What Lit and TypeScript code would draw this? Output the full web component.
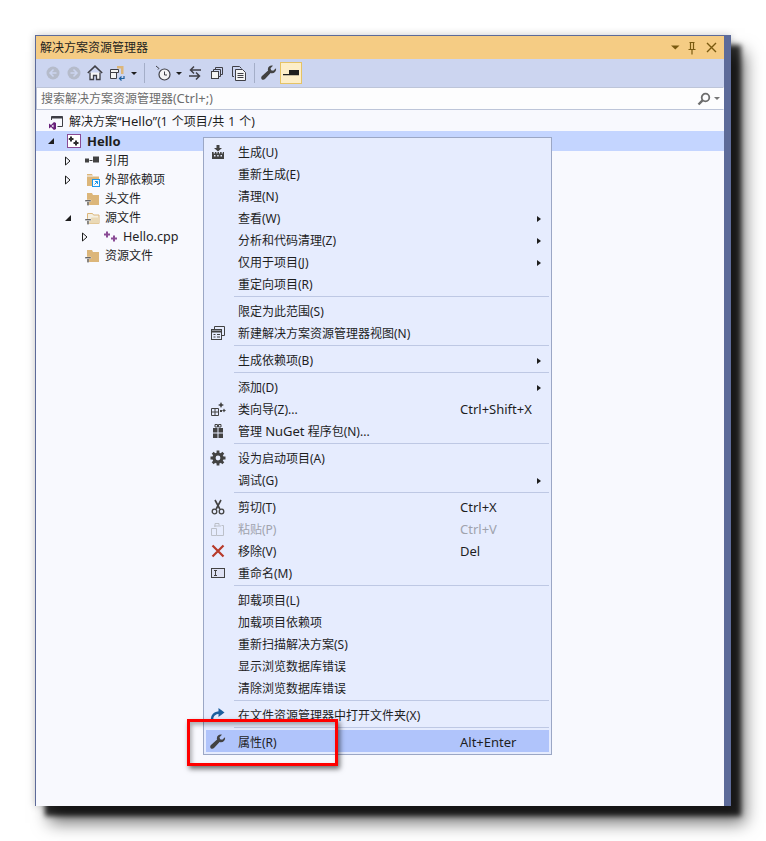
import { LitElement, html, css, svg } from "lit";
import { customElement } from "lit/decorators.js";

const ic = (w: number, h: number, body: unknown) =>
  html`<svg width=${w} height=${h} viewBox="0 0 ${w} ${h}">${body}</svg>`;

const dk = "#424242";
const icons: Record<string, unknown> = {
  build: ic(16, 16, svg`<path d="M6.500 1h3v3H12L8 7.500 4 4h2.500z" fill="${dk}"/><path d="M2 8h1.600v1.600h1.300V8h1.500v1.600h1.100V8h1.500v1.600h1.100V8h1.500v1.600h1.200V8H14v7H2z" fill="${dk}"/><path d="M4 11h1.500v1.500H4zM7.200 11h1.500v1.500H7.200zM10.500 11H12v1.500h-1.500z" fill="#e6ecfe"/>`),
  view: ic(16, 16, svg`<path d="M4.500 4.500v-3h10v9h-3" fill="none" stroke="${dk}"/><rect x="1.500" y="4.500" width="10" height="10" fill="#e6ecfe" stroke="${dk}"/><path d="M1.500 6.500h10" stroke="${dk}" stroke-width="2"/><path d="M3.500 9.500h2M7 9.500h3M3.500 12h2M7 12h3" stroke="${dk}"/>`),
  wizard: ic(16, 16, svg`<path d="M1.500 7.500h7v7h-7zM5 7.500v7M1.500 11h7" fill="none" stroke="${dk}"/><path d="M11 1l1 2 2 1-2 1-1 2-1-2-2-1 2-1zM14 7.500l.7 1.300 1.300.7-1.300.7-.7 1.300-.7-1.300-1.300-.7 1.300-.7zM10 9h2v2h-2z" fill="${dk}"/>`),
  nuget: ic(16, 16, svg`<path d="M3 5h10v10H3z" fill="${dk}"/><path d="M5 1.500h2.500v2.500H5zM8.500 1.500H11v2.500H8.500z" fill="none" stroke="${dk}"/><path d="M7.500 5h1v10h-1zM3 9.500h10v1H3z" fill="#e6ecfe"/>`),
  gear: ic(16, 16, svg`<path d="M8 .5v15M.5 8h15M2.700 2.700l10.600 10.600M13.300 2.700 2.700 13.300" stroke="${dk}" stroke-width="2.800"/><circle cx="8" cy="8" r="5.600" fill="${dk}"/><circle cx="8" cy="8" r="2.400" fill="#e6ecfe"/>`),
  cut: ic(16, 16, svg`<path d="M5 1l4.800 9M11 1 6.200 10" fill="none" stroke="${dk}" stroke-width="1.600"/><circle cx="4.500" cy="12.500" r="2.300" fill="none" stroke="${dk}" stroke-width="1.300"/><circle cx="11.500" cy="12.500" r="2.300" fill="none" stroke="${dk}" stroke-width="1.300"/>`),
  paste: ic(16, 16, svg`<path d="M1.500 7.500h5v7h-5zM6.500 14.500h7v-10h-2M5 6V2.500h4V4.500" fill="none" stroke="#bcc0c9"/><path d="M4 5h7" stroke="#bcc0c9"/>`),
  remove: ic(16, 16, svg`<path d="M2.500 2.500l11 11M13.500 2.500l-11 11" stroke="#b73a2a" stroke-width="2.200"/>`),
  rename: ic(16, 16, svg`<rect x="1.500" y="3.500" width="13" height="9" fill="#dfe2f4" stroke="${dk}"/><path d="M4 5.500h3M4 10.500h3M5.500 5.500v5" stroke="${dk}"/>`),
  open: ic(16, 16, svg`<path d="M2.500 14.500C.8 9 4.500 5.200 10.500 5.500" fill="none" stroke="#1c5f9e" stroke-width="2.400"/><path d="M8.500 1l6 4.500-6 4.500z" fill="#1c5f9e"/>`),
  wrench: ic(16, 16, svg`<path d="M15 3.200c.6 2.500-1.200 5-4 5-.6 0-1-.1-1.400-.3L4 14c-.9 1-2.500 1-3.300.2-.8-.9-.6-2.300.3-3.100l6.100-5.600C6.900 5 6.800 4.500 6.900 4c.1-2.300 2.500-4 5-3.300L9.500 3.300l.6 2 2.100.5z" fill="${dk}"/>`),
};

type Item = { t?: unknown; icon?: string; key?: string; arrow?: boolean; dis?: boolean; sel?: boolean; sep?: boolean };
const menu: Item[] = [
  { t: "生成(U)", icon: "build" },
  { t: "重新生成(E)" },
  { t: "清理(N)" },
  { t: "查看(W)", arrow: true },
  { t: "分析和代码清理(Z)", arrow: true },
  { t: "仅用于项目(J)", arrow: true },
  { t: "重定向项目(R)" },
  { sep: true },
  { t: "限定为此范围(S)" },
  { t: "新建解决方案资源管理器视图(N)", icon: "view" },
  { sep: true },
  { t: "生成依赖项(B)", arrow: true },
  { sep: true },
  { t: "添加(D)", arrow: true },
  { t: "类向导(Z)...", icon: "wizard", key: "Ctrl+Shift+X" },
  { t: html`管理 <span class="lat">NuGet</span> 程序包(N)...`, icon: "nuget" },
  { sep: true },
  { t: "设为启动项目(A)", icon: "gear" },
  { t: "调试(G)", arrow: true },
  { sep: true },
  { t: "剪切(T)", icon: "cut", key: "Ctrl+X" },
  { t: "粘贴(P)", icon: "paste", key: "Ctrl+V", dis: true },
  { t: "移除(V)", icon: "remove", key: "Del" },
  { t: "重命名(M)", icon: "rename" },
  { sep: true },
  { t: "卸载项目(L)" },
  { t: "加载项目依赖项" },
  { t: "重新扫描解决方案(S)" },
  { t: "显示浏览数据库错误" },
  { t: "清除浏览数据库错误" },
  { sep: true },
  { t: "在文件资源管理器中打开文件夹(X)", icon: "open" },
  { sep: true },
  { t: "属性(R)", icon: "wrench", key: "Alt+Enter", sel: true },
];

const tb = "#3f3f46";
const tbIcons = {
  back: ic(16, 16, svg`<circle cx="8" cy="8" r="6.500" fill="#b5bbca"/><path d="M8.500 4.500 5 8l3.500 3.500M5 8h6.500" fill="none" stroke="#ccd5f0" stroke-width="1.500"/>`),
  fwd: ic(16, 16, svg`<circle cx="8" cy="8" r="6.500" fill="#b5bbca"/><path d="M7.500 4.500 11 8l-3.500 3.500M11 8H4.500" fill="none" stroke="#ccd5f0" stroke-width="1.500"/>`),
  home: ic(16, 16, svg`<path d="M.8 8 8 1.200 15.200 8" fill="none" stroke="${tb}" stroke-width="1.600"/><path d="M3 7.500v7h3.500v-4h3v4H13v-7" fill="#f6f6f6" stroke="${tb}" stroke-width="1.300"/>`),
  sync: ic(16, 16, svg`<path d="M8 1h6.500v8H12V3.500H8z" fill="#dcb67a"/><path d="M1.500 4.500h8v3h-8zM1.500 7.500h6v6h-6z" fill="#f4f4f4" stroke="${tb}"/><path d="M15 11v2.500h-4M12.500 11.500l-2 2 2 2" fill="none" stroke="#1c5f9e" stroke-width="1.200"/>`),
  clock: ic(16, 16, svg`<circle cx="9.500" cy="9.500" r="5.500" fill="#f4f4f4" stroke="${tb}" stroke-width="1.200"/><path d="M9.500 6.500v3.500h2.500M1 1l3 2.500-1 1" fill="none" stroke="${tb}"/>`),
  swap: ic(16, 16, svg`<path d="M14 5H4M7 1.500 3.500 5 7 8.500M2 11h10M9 7.500l3.500 3.500L9 14.500" fill="none" stroke="${tb}" stroke-width="1.500"/>`),
  copy: ic(16, 16, svg`<path d="M6.500 4.500v-2h7v7h-2" fill="none" stroke="${tb}"/><path d="M4.500 6.500v-2h7v7h-2" fill="#ccd5f0" stroke="${tb}"/><rect x="2.500" y="6.500" width="7" height="7" fill="#f4f4f4" stroke="${tb}"/>`),
  pages: ic(16, 16, svg`<path d="M3 11.500h-1.500v-10h7l2 2" fill="none" stroke="${tb}"/><path d="M4.500 4.500h7l3 3v8h-10z" fill="#f4f4f4" stroke="${tb}"/><path d="M6.500 8.500h6M6.500 10.500h6M6.500 12.500h6" stroke="${tb}"/>`),
  wrench: icons.wrench,
};

@customElement("app-root")
export class AppRoot extends LitElement {
  static styles = css`
    :host {
      display: block;
      height: 841px;
      padding: 35px 0 0 35px;
      box-sizing: border-box;
      background: #fff;
      font: 12px/22px "Noto Sans", "Noto Sans CJK SC", sans-serif;
      color: #1e1e1e;
    }
    svg { display: block; }
    .lat { font-size: 13px; }
    .cpp { font-size: 12.6px; }
    .win {
      position: relative;
      display: flex;
      flex-direction: column;
      width: 696px;
      height: 771px;
      box-sizing: border-box;
      background: #5d6b99;
      padding: 1px 7px 0 1px;
      box-shadow: 10px 10px 5px rgba(0, 0, 0, 0.8), 14px 17px 16px rgba(0, 0, 0, 0.55), 0 0 8px rgba(0, 0, 0, 0.2);
    }
    .title {
      height: 23px;
      flex: none;
      display: flex;
      align-items: center;
      background: #f5cc84;
      padding: 0 7px 0 4px;
      line-height: 23px;
    }
    .title .name { flex: 1; }
    .title svg { flex: none; }
    .title .pin { margin: 0 5px 0 3px; }
    .tbar {
      height: 28px;
      flex: none;
      display: flex;
      align-items: center;
      padding-left: 6px;
      background: #ccd5f0;
    }
    .s { width: 22px; height: 22px; display: flex; align-items: center; justify-content: center; flex: none; }
    .s.n { width: 21px; }
    .caret { width: 12px; display: flex; justify-content: center; flex: none; }
    .caret.b { width: 10px; }
    .caret i, .sd i { display: block; width: 0; height: 0; border: 3px solid transparent; border-top-color: #1e1e1e; border-bottom: 0; }
    .vsep { width: 1px; height: 20px; background: #a4aec8; margin: 0 3px 0 4px; flex: none; }
    .gap { width: 4px; flex: none; }
    .pinb { width: 22px; height: 22px; box-sizing: border-box; border: 1px solid #e5c365; background: #fdeec8; display: flex; align-items: center; justify-content: center; flex: none; }
    .search {
      height: 23px;
      flex: none;
      box-sizing: border-box;
      display: flex;
      align-items: center;
      padding: 0 3px 0 4px;
      background: #fdfdfe;
      border: 1px solid #bdc5d9;
      border-right-color: #fdfdfe;
      color: #6d6d6d;
      line-height: 21px;
    }
    .search .q { flex: 1; }
    .sd { margin-left: 3px; flex: none; }
    .sd i { border-top-color: #777; }
    .tree { flex: 1; background: #f8f9fe; padding-top: 2px; position: relative; }
    .row { height: 19px; line-height: 19px; display: flex; align-items: center; white-space: nowrap; }
    .row.sel { height: 20px; background: #c4d5ff; }
    .row.sel .lbl { font-weight: 700; font-size: 13px; }
    .exp { width: 10px; display: flex; justify-content: center; flex: none; }
    .ico { width: 16px; height: 16px; flex: none; margin-right: 5px; }
    .nx { width: 10px; flex: none; }
    .l0 { padding-left: 12px; word-spacing: 1px; }
    .l0 .nx { width: 0; }
    .l1 { padding-left: 10px; }
    .l1 .ico { margin-left: 10px; }
    .l2 { padding-left: 27px; }
    .l2 .ico { margin-left: 11px; }
    .l3 { padding-left: 44px; }
    .l3 .ico { margin-left: 12px; }
    .menu {
      position: absolute;
      left: 167px;
      top: 27px;
      width: 349px;
      box-sizing: border-box;
      padding: 2px 2px 2px 2px;
      background: #e6ecfe;
      border: 1px solid #9ba7c5;
    }
    .mi {
      height: 22px;
      display: grid;
      grid-template-columns: 24px 230px 1fr 12px;
      align-items: center;
    }
    .mi .mic { display: flex; justify-content: center; align-items: center; height: 24px; align-self: start; }
    .mi .txt { padding-left: 8px; white-space: nowrap; align-self: start; line-height: 25px; height: 22px; }
    .mi .key { font-size: 13px; align-self: start; line-height: 24px; height: 22px; }
    .mi.sel { background: #b0c4fb; }
    .mi.dis { color: #a0a3ad; }
    .mi .arr { width: 0; height: 0; margin-top: 2px; border: 3.500px solid transparent; border-left: 4px solid #1e1e1e; border-right: 0; }
    .msep { height: 5px; padding: 2px 0 0 28px; box-sizing: border-box; }
    .msep i { display: block; height: 1px; background: #bec8e4; }
    .mark {
      position: absolute;
      left: 152px;
      top: 684px;
      width: 151px;
      height: 47px;
      box-sizing: border-box;
      border: 3px solid #f00;
      box-shadow: 2px 3px 5px rgba(0, 0, 0, 0.55), inset 2px 3px 4px rgba(0, 0, 0, 0.3);
    }
  `;

  private tri(open: boolean) {
    return open
      ? ic(10, 10, svg`<path d="M8 2v6H2z" fill="#1e1e1e"/>`)
      : ic(10, 10, svg`<path d="M2.500 1v8l4.500-4z" fill="#f8f9fe" stroke="#1e1e1e"/>`);
  }

  private folder(kind: "plain" | "open" | "dep") {
    const body =
      kind === "open"
        ? svg`<path d="M3.500 3.500h5l1 1.500h5.500v8.500H3.500z" fill="#f4efe2" stroke="#dcb67a"/><path d="M4.500 12.500l3-5h7.500v6H4.500z" fill="#ead9b6"/>`
        : svg`<path d="M3 2h5l1 2h6v10H3z" fill="#dcb67a"/>`;
    const extra =
      kind === "dep"
        ? svg`<path d="M3 4h12" stroke="#f8f9fe"/><rect x="8.500" y="7.500" width="7" height="7" fill="#f8f9fe" stroke="#1c97ea"/><path d="M10.500 12.500l3-3M11 9.500h2.500V12" fill="none" stroke="#1c97ea"/>`
        : svg`<path d="M1 9h6v1.500H1zM3.200 10.500h1.600v4H3.200z" fill="#424242" stroke="#f8f9fe" stroke-width=".4"/>`;
    return ic(16, 16, svg`${body}${extra}`);
  }

  private treeRow(cls: string, exp: unknown, icon: unknown, label: unknown) {
    return html`<div class="row ${cls}">
      ${exp === null ? html`<span class="nx"></span>` : html`<span class="exp">${exp}</span>`}
      <span class="ico">${icon}</span><span class="lbl">${label}</span>
    </div>`;
  }

  private menuItem(m: Item) {
    if (m.sep) return html`<div class="msep"><i></i></div>`;
    return html`<div class="mi ${m.sel ? "sel" : ""} ${m.dis ? "dis" : ""}">
      <span class="mic">${m.icon ? icons[m.icon] : ""}</span>
      <span class="txt">${m.t}</span>
      <span class="key">${m.key ?? ""}</span>
      <span>${m.arrow ? html`<div class="arr"></div>` : ""}</span>
    </div>`;
  }

  render() {
    const sol = ic(16, 16, svg`<path d="M3.500 6V2.500h11v10h-5" fill="none" stroke="#3f3f46"/><path d="M3.500 2.500h11v2h-11z" fill="#3f3f46"/><path d="M1 9.500l2 1.500 3-3 2 1v6l-2 1-3-3-2 1.500z" fill="#68217a"/><path d="M3.500 12l2-1.500v3z" fill="#f8f9fe"/>`);
    const proj = ic(16, 16, svg`<rect x="1.500" y="1.500" width="13" height="13" fill="#fff" stroke="#8a4b95"/><path d="M4 3.500h2v1.500h1.500V7H6v1.500H4V7H2.800V5H4zM9 7.500h2V9h1.500v2H11v1.500H9V11H7.500V9H9z" fill="#2f2f2f"/>`);
    const ref = ic(16, 16, svg`<path d="M1 5.500h4v4H1zM9 3.500h6v6H9z" fill="#424242"/><path d="M5.500 7.500h3" stroke="#424242"/>`);
    const cpp = ic(16, 16, svg`<path d="M4 2.500h2v2h2v2H6v2H4v-2H2v-2h2zM11 6.500h2v2h2v2h-2v2h-2v-2H9v-2h2z" fill="#8a4b95"/>`);
    return html`<div class="win">
      <div class="title">
        <span class="name">解决方案资源管理器</span>
        ${ic(9, 5, svg`<path d="M0 .5h8.500L4.250 4.500z" fill="#7a5a10"/>`)}
        <span class="pin">${ic(18, 14, svg`<path d="M6.500 1.500h5M7.500 1.500v7M10.500 1.500v7M5.500 8.500h7M9 8.500v5" fill="none" stroke="#7a5a10" stroke-width="1.200"/>`)}</span>
        ${ic(11, 11, svg`<path d="M1 1l9 9M10 1l-9 9" stroke="#7a5a10" stroke-width="1.400"/>`)}
      </div>
      <div class="tbar">
        <span class="s n">${tbIcons.back}</span>
        <span class="s n">${tbIcons.fwd}</span>
        <span class="s">${tbIcons.home}</span>
        <span class="s">${tbIcons.sync}</span>
        <span class="caret"><i></i></span>
        <span class="vsep"></span>
        <span class="gap"></span>
        <span class="s">${tbIcons.clock}</span>
        <span class="caret b"><i></i></span>
        <span class="s">${tbIcons.swap}</span>
        <span class="s">${tbIcons.copy}</span>
        <span class="s">${tbIcons.pages}</span>
        <span class="vsep"></span>
        <span class="s">${tbIcons.wrench}</span>
        <span class="pinb">${ic(16, 16, svg`<path d="M0 9h16v1.300H0zM6 5h10v4H6z" fill="#1e1e1e"/>`)}</span>
      </div>
      <div class="search">
        <span class="q">搜索解决方案资源管理器(<span class="lat">Ctrl+;</span>)</span>
        ${ic(14, 14, svg`<circle cx="8.500" cy="5.500" r="3.800" fill="none" stroke="#6d6d6d" stroke-width="1.800"/><path d="M5.800 8.200 1.500 12.500" stroke="#6d6d6d" stroke-width="2.400"/>`)}
        <span class="sd"><i></i></span>
      </div>
      <div class="tree">
        ${this.treeRow("l0", null, sol, html`解决方案“<span class="lat">Hello</span>”(1 个项目/共 1 个)`)}
        ${this.treeRow("sel l1", this.tri(true), proj, "Hello")}
        ${this.treeRow("l2", this.tri(false), ref, "引用")}
        ${this.treeRow("l2", this.tri(false), this.folder("dep"), "外部依赖项")}
        ${this.treeRow("l2", null, this.folder("plain"), "头文件")}
        ${this.treeRow("l2", this.tri(true), this.folder("open"), "源文件")}
        ${this.treeRow("l3", this.tri(false), cpp, html`<span class="cpp">Hello.cpp</span>`)}
        ${this.treeRow("l2", null, this.folder("plain"), "资源文件")}
        <div class="menu">${menu.map((m) => this.menuItem(m))}</div>
      </div>
      <div class="mark"></div>
    </div>`;
  }
}
